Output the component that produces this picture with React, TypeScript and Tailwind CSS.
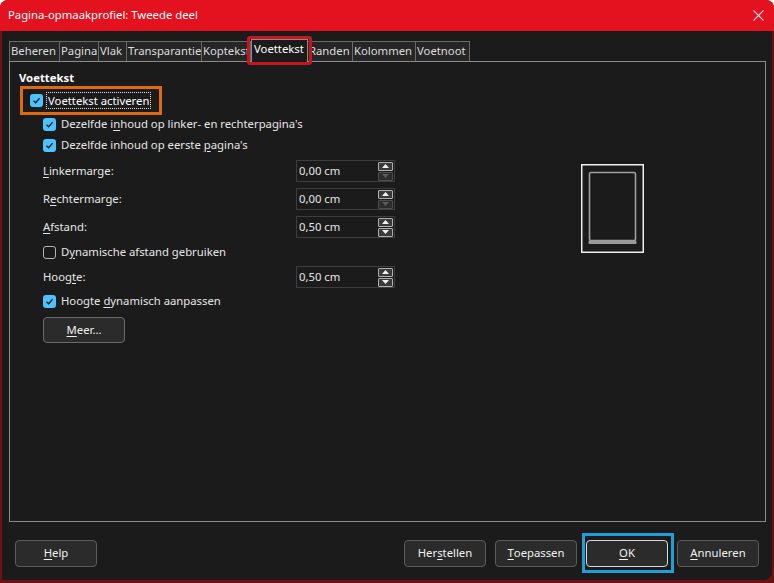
import type { ReactNode } from 'react'

const tabs = [
  { label: 'Beheren', w: 'w-[51px]' },
  { label: 'Pagina', w: 'w-[40px]' },
  { label: 'Vlak', w: 'w-[29px]' },
  { label: 'Transparantie', w: 'w-[76px]' },
  { label: 'Koptekst', w: 'w-[50px]' },
  { label: 'Voettekst', w: 'w-[57px]', active: true },
  { label: 'Randen', w: 'w-[46px]' },
  { label: 'Kolommen', w: 'w-[64px]' },
  { label: 'Voetnoot', w: 'w-[55px]' },
]

// Mnemonic letter, underlined like the native dialog does
function U({ children }: { children: ReactNode }) {
  return <span className="underline underline-offset-[2px] decoration-1">{children}</span>
}

function Check({ checked }: { checked?: boolean }) {
  if (!checked)
    return <span className="block h-[13px] w-[13px] shrink-0 rounded-[3px] border border-[#b5b5b5] bg-[#1b1b1b]" />
  return (
    <span className="flex h-[13px] w-[13px] shrink-0 items-center justify-center rounded-[3px] bg-[#4cc2ff]">
      <svg width="9" height="9" viewBox="0 0 9 9">
        <path d="M1.5 4.8 L3.6 6.8 L7.6 2.2" fill="none" stroke="#1b1b1b" strokeWidth="1.3" />
      </svg>
    </span>
  )
}

function Spin({ downOff }: { downOff?: boolean }) {
  return (
    <div className="flex w-[15px] flex-col gap-[1px]">
      <div className="flex h-[9px] items-center justify-center rounded-[1px] border border-[#b0b0b0] bg-[#3a3a3a]">
        <svg width="7" height="4" viewBox="0 0 7 4">
          <path d="M0 4 L3.5 0 L7 4 Z" fill="#f2f2f2" />
        </svg>
      </div>
      <div
        className={
          downOff
            ? 'flex h-[9px] items-center justify-center rounded-[1px] border border-[#4e4e4e] bg-[#2c2c2c]'
            : 'flex h-[9px] items-center justify-center rounded-[1px] border border-[#b0b0b0] bg-[#3a3a3a]'
        }
      >
        <svg width="7" height="4" viewBox="0 0 7 4">
          <path d="M0 0 L3.5 4 L7 0 Z" fill={downOff ? '#5c5c5c' : '#f2f2f2'} />
        </svg>
      </div>
    </div>
  )
}

function Field({ label, value, downOff }: { label: ReactNode; value: string; downOff?: boolean }) {
  return (
    <div className="flex h-[28px] items-center">
      <span className="w-[253px]">{label}</span>
      <div className="flex h-[22px] w-[99px] items-center justify-between border border-[#3e3e3e] pl-[2px] pr-[1px]">
        <span>{value}</span>
        <Spin downOff={downOff} />
      </div>
    </div>
  )
}

function CheckRow({ checked, children, h }: { checked?: boolean; children: ReactNode; h: string }) {
  return (
    <div className={`flex ${h} items-center gap-[5px]`}>
      <Check checked={checked} />
      <span>{children}</span>
    </div>
  )
}

function Button({ children }: { children: ReactNode }) {
  return (
    <button className="flex h-[27px] w-[82px] items-center justify-center rounded-[4px] border border-[#5c5c5c] bg-[#2b2b2b] text-[#f0f0f0]">
      {children}
    </button>
  )
}

export default function App() {
  return (
    <div
      className="flex h-[583px] w-[774px] flex-col overflow-hidden rounded-t-[8px] bg-[#6e1015] text-[11.3px] text-[#e6e6e6]"
      style={{ fontFamily: '"Noto Sans", "Open Sans", sans-serif' }}
    >
      {/* Title bar */}
      <div className="flex h-[31px] shrink-0 items-center justify-between bg-[#e4111f] pl-[8px] pr-[10px] text-white">
        <span>Pagina-opmaakprofiel: Tweede deel</span>
        <svg width="11" height="11" viewBox="0 0 11 11">
          <path d="M0.5 0.5 L10.5 10.5 M10.5 0.5 L0.5 10.5" stroke="#f4d0d3" strokeWidth="1.1" />
        </svg>
      </div>

      {/* Dialog body */}
      <div className="mb-[3px] ml-[2px] mr-[2px] flex flex-1 flex-col rounded-br-[8px] bg-[#1b1b1b] pl-[7px] pr-[6px]">
        {/* Tabs */}
        <div className="flex h-[30px] items-end pl-[1px]">
          {tabs.map((t) =>
            t.active ? (
              <div
                key={t.label}
                className={`relative z-10 -mb-[1px] flex h-[23px] ${t.w} items-start border border-b-0 border-[#8c8c8c] bg-[#1b1b1b] pl-[2px] pt-[1px] text-white`}
              >
                {t.label}
                <span className="absolute -bottom-[3px] -left-[5px] -right-[5px] -top-[4px] rounded-[3px] border-[3px] border-[#c8141c]" />
              </div>
            ) : (
              <div
                key={t.label}
                className={`-ml-[1px] flex h-[20px] ${t.w} items-center overflow-hidden whitespace-nowrap border border-b-0 border-[#6a6a6a] bg-[#262626] pl-[1px] text-[#dcdcdc]`}
              >
                {t.label}
              </div>
            ),
          )}
        </div>

        {/* Tab panel */}
        <div className="flex h-[461px] border border-[#8a8a8a]">
          <div className="w-[400px] pl-[9px] pt-[8px]">
            <div className="flex h-[16px] items-center font-bold text-white">Voettekst</div>
            <div className="ml-[1px] flex h-[29px] w-[142px] items-center gap-[3px] border-[3px] border-[#e06a10] pl-[7px]">
              <Check checked />
              <span className="border border-dotted border-[#e0e0e0] px-[1px] leading-[15px] text-white">Voettekst activeren</span>
            </div>
            <div className="pl-[24px]">
              <CheckRow checked h="h-[18px]">
                Dezelfde i<U>n</U>houd op linker- en rechterpagina's
              </CheckRow>
              <CheckRow checked h="h-[24px]">
                Dezelfde inhoud op eerste <U>p</U>agina's
              </CheckRow>
              <Field label={<><U>L</U>inkermarge:</>} value="0,00 cm" downOff />
              <Field label={<>R<U>e</U>chtermarge:</>} value="0,00 cm" downOff />
              <Field label={<><U>A</U>fstand:</>} value="0,50 cm" />
              <CheckRow h="h-[22px]">
                D<U>y</U>namische afstand gebruiken
              </CheckRow>
              <Field label={<>Hoog<U>t</U>e:</>} value="0,50 cm" />
              <CheckRow checked h="h-[20px]">
                Hoogte <U>d</U>ynamisch aanpassen
              </CheckRow>
              <div className="mt-[6px] flex h-[26px] w-[82px] items-center justify-center rounded-[4px] border border-[#6a6a6a] bg-[#2b2b2b] text-[#f0f0f0]">
                <span>
                  <U>M</U>eer...
                </span>
              </div>
            </div>
          </div>

          {/* Page preview */}
          <div className="ml-[171px] mt-[102px]">
            <svg width="63" height="89" viewBox="0 0 63 89">
              <rect x="0.75" y="0.75" width="61.5" height="87.5" fill="none" stroke="#f0f0f0" strokeWidth="1.5" />
              <rect x="8.5" y="8.5" width="46" height="68" rx="1.5" fill="none" stroke="#a0a0a0" strokeWidth="1.6" />
              <rect x="7.5" y="76.5" width="48" height="3.5" rx="1" fill="#9a9a9a" />
            </svg>
          </div>
        </div>

        {/* Buttons */}
        <div className="flex h-[58px] items-start justify-between pl-[6px] pr-[7px] pt-[18px]">
          <Button>
            <U>H</U>elp
          </Button>
          <div className="flex gap-[9px]">
            <Button>
              Her<U>s</U>tellen
            </Button>
            <Button>
              <U>T</U>oepassen
            </Button>
            <div className="relative">
              <button className="flex h-[27px] w-[82px] items-center justify-center rounded-[4px] border border-[#d8d8d8] bg-[#2b2b2b] text-[#f0f0f0]">
                <U>O</U>K
              </button>
              <span className="absolute -bottom-[6px] -left-[4px] -right-[6px] -top-[7px] border-[3px] border-[#1e9fd8]" />
            </div>
            <Button>
              <U>A</U>nnuleren
            </Button>
          </div>
        </div>
      </div>
    </div>
  )
}
